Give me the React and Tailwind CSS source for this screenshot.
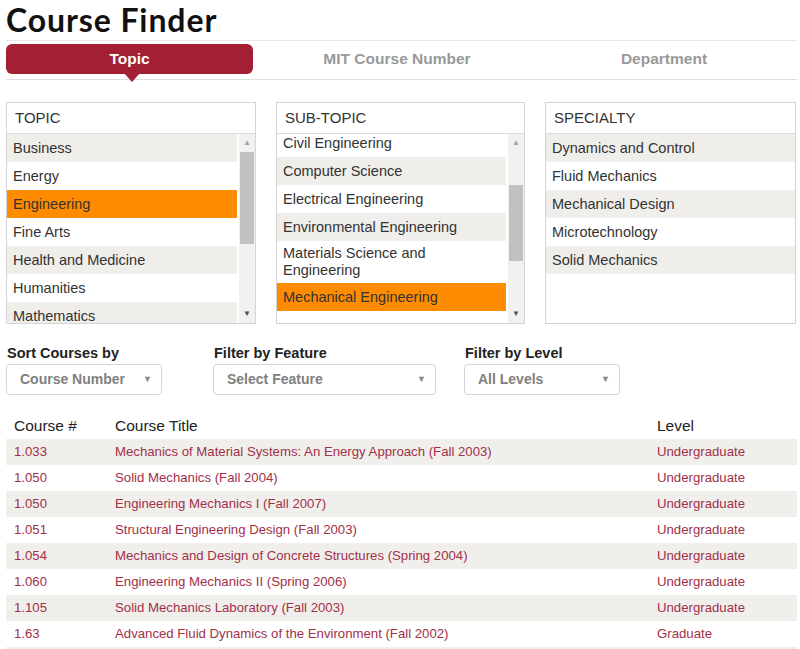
import React from 'react'

const topics = ['Business', 'Energy', 'Engineering', 'Fine Arts', 'Health and Medicine', 'Humanities', 'Mathematics', 'Science']
const subTopics = [
  'Civil Engineering',
  'Computer Science',
  'Electrical Engineering',
  'Environmental Engineering',
  'Materials Science and Engineering',
  'Mechanical Engineering',
]
const specialties = ['Dynamics and Control', 'Fluid Mechanics', 'Mechanical Design', 'Microtechnology', 'Solid Mechanics']

const courses = [
  ['1.033', 'Mechanics of Material Systems: An Energy Approach (Fall 2003)', 'Undergraduate'],
  ['1.050', 'Solid Mechanics (Fall 2004)', 'Undergraduate'],
  ['1.050', 'Engineering Mechanics I (Fall 2007)', 'Undergraduate'],
  ['1.051', 'Structural Engineering Design (Fall 2003)', 'Undergraduate'],
  ['1.054', 'Mechanics and Design of Concrete Structures (Spring 2004)', 'Undergraduate'],
  ['1.060', 'Engineering Mechanics II (Spring 2006)', 'Undergraduate'],
  ['1.105', 'Solid Mechanics Laboratory (Fall 2003)', 'Undergraduate'],
  ['1.63', 'Advanced Fluid Dynamics of the Environment (Fall 2002)', 'Graduate'],
]

function Scrollbar({ thumbTop, thumbHeight }) {
  return (
    <div className="w-[16px] shrink-0 flex flex-col bg-[#f1f1f1]">
      <div className="h-[18px] flex items-center justify-center text-[#a3a3a3] text-[8px] leading-none">▲</div>
      <div className="flex-1 flex flex-col">
        <div style={{ height: thumbTop }} />
        <div className="bg-[#c1c1c1] mx-[1px]" style={{ height: thumbHeight }} />
      </div>
      <div className="h-[18px] flex items-center justify-center text-[#505050] text-[8px] leading-none">▼</div>
    </div>
  )
}

function ListPanel({ title, items, selected, offset = 0, scroll }) {
  return (
    <div className="border border-[#d4d4d4] h-[222px] flex flex-col bg-white">
      <div className="h-[31px] border-b border-[#dcdcdc] flex items-center pl-[8px] text-[15px] text-[#333]">{title}</div>
      <div className="flex-1 flex overflow-hidden">
        <div className={'flex-1 overflow-hidden ' + (scroll ? 'mr-[2px]' : '')}>
          <ul style={{ marginTop: offset }}>
            {items.map((it, i) => (
              <li
                key={it}
                className={
                  'min-h-[28px] px-[6px] py-[4px] text-[14.5px] leading-[17px] text-[#333] flex items-center ' +
                  (it === selected ? 'bg-[#ff8c00]' : i % 2 === (offset ? 1 : 0) ? 'bg-[#f0eeeb]' : 'bg-white')
                }
              >
                {it}
              </li>
            ))}
          </ul>
        </div>
        {scroll ? <Scrollbar thumbTop={scroll[0]} thumbHeight={scroll[1]} /> : null}
      </div>
    </div>
  )
}

function Select({ label, value, width }) {
  return (
    <div className="flex flex-col" style={{ width }}>
      <p className="text-[14.5px] font-bold text-[#222] leading-[18px] mb-[2px] pl-[1px]">{label}</p>
      <div className="h-[31px] border border-[#d6d6d6] rounded-[4px] flex items-center justify-between pl-[13px] pr-[9px] bg-white">
        <span className="text-[14px] font-bold text-[#808080]">{value}</span>
        <span className="text-[9px] text-[#888]">▼</span>
      </div>
    </div>
  )
}

export default function App() {
  return (
    <div className="w-[800px] h-[649px] overflow-hidden bg-white font-['Liberation_Sans',Arial,sans-serif]">
      <div className="pl-[6px] pr-[3px]">
        <h1 className="font-['Lato',sans-serif] font-bold text-[32px] leading-[40px] text-[#111] tracking-[0.9px]">
          Course Finder
        </h1>

        <div className="border-t border-[#e6e6e6] pt-[3px]">
          <div className="flex border-b border-[#dedede] h-[36px]">
            <div className="w-[247px] relative">
              <div className="h-[30px] rounded-[6px] bg-[#a31f34] flex items-center justify-center text-white font-bold text-[15.5px]">
                Topic
              </div>
              <div className="absolute left-[118px] top-[29px] w-0 h-0 border-l-[8px] border-r-[8px] border-t-[9px] border-l-transparent border-r-transparent border-t-[#a31f34]" />
            </div>
            <div className="w-[288px] h-[30px] flex items-center justify-center text-[15.5px] font-bold text-[#999]">
              MIT Course Number
            </div>
            <div className="w-[246px] h-[30px] flex items-center justify-center text-[15.5px] font-bold text-[#999]">
              Department
            </div>
          </div>
        </div>

        <div className="grid grid-cols-[250px_249px_251px] gap-x-[20px] mt-[22px]">
          <ListPanel title="TOPIC" items={topics} selected="Engineering" scroll={[0, 92]} />
          <ListPanel title="SUB-TOPIC" items={subTopics} selected="Mechanical Engineering" offset={-5} scroll={[33, 76]} />
          <ListPanel title="SPECIALTY" items={specialties} />
        </div>

        <div className="flex mt-[20px]">
          <Select label="Sort Courses by" value="Course Number" width={156} />
          <div className="w-[51px]" />
          <Select label="Filter by Feature" value="Select Feature" width={223} />
          <div className="w-[28px]" />
          <Select label="Filter by Level" value="All Levels" width={156} />
        </div>

        <div className="mt-[17px]">
          <div className="flex h-[27px] items-center text-[15.5px] text-[#222]">
            <span className="w-[109px] pl-[8px]">Course #</span>
            <span className="flex-1">Course Title</span>
            <span className="w-[140px]">Level</span>
          </div>
          {courses.map((c, i) => (
            <div
              key={i}
              className={'flex h-[26px] items-center text-[13.2px] text-[#a13049] ' + (i % 2 === 0 ? 'bg-[#f1efec]' : 'bg-white')}
            >
              <span className="w-[109px] pl-[8px]">{c[0]}</span>
              <span className="flex-1">{c[1]}</span>
              <span className="w-[140px]">{c[2]}</span>
            </div>
          ))}
          <div className="h-[26px] bg-[#f1efec]" />
        </div>
      </div>
    </div>
  )
}
